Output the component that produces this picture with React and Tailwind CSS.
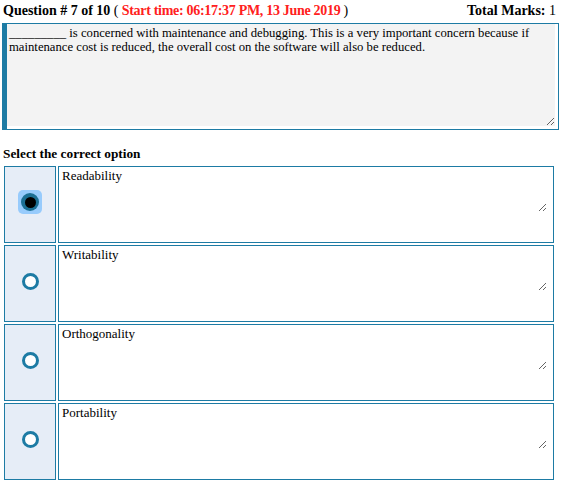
import React from "react";

const options = ["Readability", "Writability", "Orthogonality", "Portability"];

function Radio({ checked }) {
  if (checked) {
    return (
      <div className="w-[24px] h-[24px] rounded-[5px] bg-[#97cbfc] flex items-center justify-center">
        <div className="w-[18px] h-[18px] rounded-full bg-[#1b6f94] flex items-center justify-center">
          <div className="w-[11px] h-[11px] rounded-full bg-black" />
        </div>
      </div>
    );
  }
  return <div className="w-[17px] h-[17px] rounded-full border-[3px] border-[#1d7ba4] bg-white" />;
}

export default function App() {
  return (
    <div className="w-[564px] h-[485px] bg-white text-black font-['Liberation_Serif',serif] relative overflow-hidden">
      <div className="flex justify-between items-end h-[22px] pl-[3px] pr-[8px] text-[14px] leading-[16px]">
        <div className="pb-[3px]">
          <span className="font-bold">Question # 7 of 10</span>
          <span> (</span>
          <span className="font-bold tracking-[-0.3px] text-[#ff2020]"> Start time: 06:17:37 PM, 13 June 2019 </span>
          <span>)</span>
        </div>
        <div className="pb-[3px]">
          <span className="font-bold">Total Marks:</span> 1
        </div>
      </div>

      <div className="ml-[2px] mt-[1px] w-[557px] h-[107px] border border-l-[5px] border-[#1d7ba4] bg-white flex">
        <textarea
          readOnly
          className="w-[548px] h-[102px] bg-[#f3f3f3] border-0 outline-none px-[2px] pt-[2px] text-[12.7px] leading-[14px] font-['Liberation_Serif',serif] text-black resize"
          defaultValue="_________ is concerned with maintenance and debugging. This is a very important concern because if maintenance cost is reduced, the overall cost on the software will also be reduced."
        />
      </div>

      <div className="mt-[16px] pl-[3px] text-[13.3px] leading-[15px] font-bold">Select the correct option</div>

      <div className="mt-[5px] ml-[4px] flex flex-col gap-[2px]">
        {options.map((opt, i) => (
          <div key={opt} className="flex gap-[2px] h-[77px]">
            <div className="w-[52px] h-full border border-[#1d7ba4] bg-[#e6edf7] flex items-center justify-center pb-[5px]">
              <Radio checked={i === 0} />
            </div>
            <div className="w-[496px] h-full border border-[#1d7ba4] bg-white pl-[1px]">
              <textarea
                readOnly
                className="w-[487px] h-[45px] bg-white border-0 outline-none px-[2px] pt-[1px] text-[13px] leading-[15px] font-['Liberation_Serif',serif] text-black resize"
                defaultValue={opt}
              />
            </div>
          </div>
        ))}
      </div>
    </div>
  );
}
